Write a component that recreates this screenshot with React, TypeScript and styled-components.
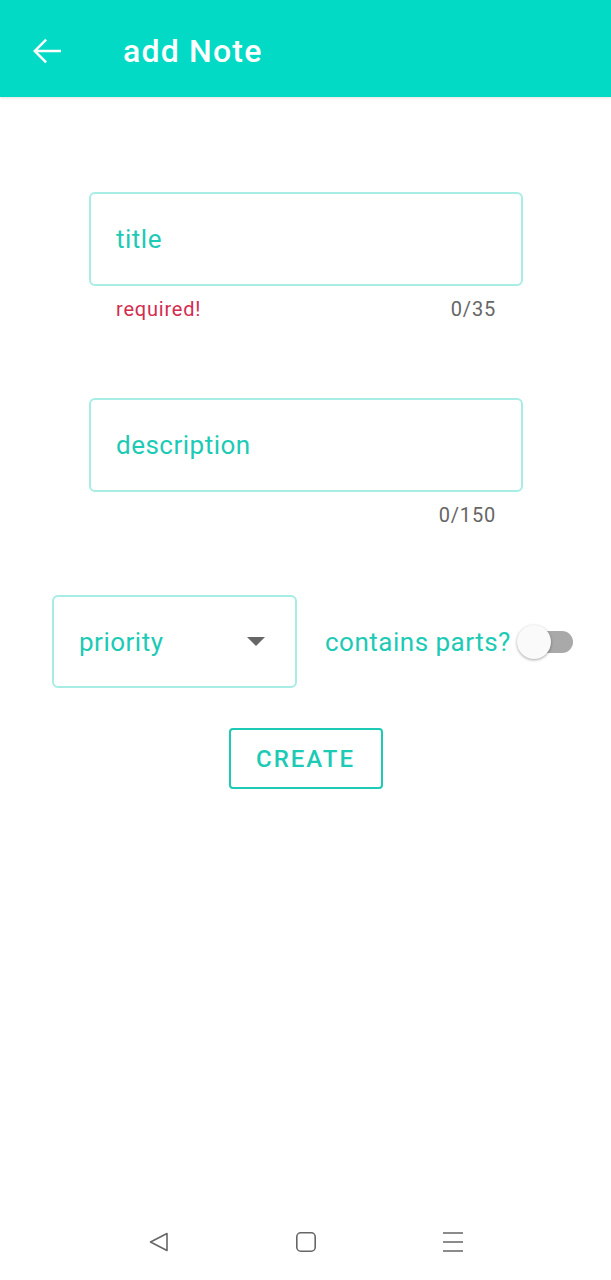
import React from "react";
import styled, { createGlobalStyle } from "styled-components";

const teal = "#03dac5";
const tealText = "#1ccab5";
const tealBorder = "#a7ece5";

const GlobalStyle = createGlobalStyle`
  body {
    margin: 0;
    background: #ffffff;
    font-family: Roboto, "Noto Sans", sans-serif;
  }
`;

type FieldProps = {
  label: string;
  error?: string;
  counter: string;
};

const TextField = ({ label, error, counter }: FieldProps) => (
  <FieldWrap>
    <FieldBox>
      <FieldLabel>{label}</FieldLabel>
    </FieldBox>
    <HelperRow>
      <ErrorText>{error}</ErrorText>
      <Counter>{counter}</Counter>
    </HelperRow>
  </FieldWrap>
);

const App = () => {
  return (
    <Page>
      <GlobalStyle />
      <AppBar>
        <BackButton>
          <svg width="42" height="42" viewBox="0 0 24 24" fill="#ffffff">
            <path d="M20 11.3H6.7l5.3-5.3-1-1L4 12l7 7 1-1-5.3-5.3H20z" />
          </svg>
        </BackButton>
        <Title>add Note</Title>
      </AppBar>

      <Content>
        <Fields>
          <TextField label="title" error="required!" counter="0/35" />
          <TextField label="description" counter="0/150" />
        </Fields>

        <OptionsRow>
          <SelectBox>
            <FieldLabel>priority</FieldLabel>
            <Caret />
          </SelectBox>
          <SwitchLabel>contains parts?</SwitchLabel>
          <SwitchTrack>
            <SwitchThumb />
          </SwitchTrack>
        </OptionsRow>

        <CreateButton>CREATE</CreateButton>
      </Content>

      <NavBar>
        <svg width="24" height="24" viewBox="0 0 24 24" fill="none" stroke="#666" strokeWidth="1.6" strokeLinejoin="round">
          <path d="M20 3.5v17L3.5 12z" />
        </svg>
        <svg width="24" height="24" viewBox="0 0 24 24" fill="none" stroke="#666" strokeWidth="1.6">
          <rect x="2.8" y="2.8" width="18.4" height="18.4" rx="4" />
        </svg>
        <svg width="24" height="24" viewBox="0 0 24 24" fill="none" stroke="#666" strokeWidth="1.6">
          <path d="M2 3h20M2 12h20M2 21h20" />
        </svg>
      </NavBar>
    </Page>
  );
};

export default App;

const Page = styled.div`
  min-height: 1280px;
  display: flex;
  flex-direction: column;
`;

const AppBar = styled.header`
  height: 97px;
  background: ${teal};
  display: flex;
  align-items: center;
  box-shadow: 0 1px 3px rgba(0, 0, 0, 0.12);
  box-sizing: border-box;
`;

const BackButton = styled.div`
  width: 42px;
  height: 42px;
  margin-left: 26px;
  margin-top: 4px;
  display: flex;
`;

const Title = styled.h1`
  margin: 4px 0 0 55px;
  color: #ffffff;
  font-size: 32px;
  font-weight: 500;
  letter-spacing: 1.2px;
`;

const Content = styled.main`
  flex: 1;
  display: flex;
  flex-direction: column;
  padding-top: 95px;
`;

const Fields = styled.div`
  margin-left: 89px;
  width: 434px;
  display: flex;
  flex-direction: column;
  gap: 78px;
`;

const FieldWrap = styled.div`
  display: flex;
  flex-direction: column;
`;

const FieldBox = styled.div`
  height: 94px;
  box-sizing: border-box;
  border: 2px solid ${tealBorder};
  border-radius: 6px;
  display: flex;
  align-items: center;
  padding-left: 25px;
`;

const FieldLabel = styled.span`
  color: ${tealText};
  font-size: 26px;
  line-height: 30px;
  letter-spacing: 0.5px;
`;

const HelperRow = styled.div`
  display: flex;
  justify-content: space-between;
  padding: 0 27px;
  margin-top: 12px;
  font-size: 20px;
  line-height: 22px;
  letter-spacing: 0.8px;
  height: 22px;
`;

const ErrorText = styled.span`
  color: #d22c50;
`;

const Counter = styled.span`
  color: #666666;
`;

const OptionsRow = styled.div`
  display: flex;
  align-items: center;
  margin: 69px 0 0 52px;
`;

const SelectBox = styled.div`
  width: 245px;
  height: 93px;
  box-sizing: border-box;
  border: 2px solid ${tealBorder};
  border-radius: 6px;
  display: flex;
  align-items: center;
  justify-content: space-between;
  padding: 0 30px 0 25px;
`;

const Caret = styled.div`
  width: 0;
  height: 0;
  border-left: 9px solid transparent;
  border-right: 9px solid transparent;
  border-top: 9px solid #666666;
`;

const SwitchLabel = styled.span`
  margin-left: 28px;
  color: ${tealText};
  font-size: 26px;
  line-height: 30px;
  letter-spacing: 0.5px;
`;

const SwitchTrack = styled.div`
  position: relative;
  width: 48px;
  height: 22px;
  margin-left: 14px;
  border-radius: 11px;
  background: #a9a9a9;
`;

const SwitchThumb = styled.div`
  position: absolute;
  left: -8px;
  top: -6px;
  width: 34px;
  height: 34px;
  border-radius: 50%;
  background: #fafafa;
  box-shadow: 0 1px 3px rgba(0, 0, 0, 0.35);
`;

const CreateButton = styled.button`
  align-self: center;
  margin-top: 40px;
  width: 154px;
  height: 61px;
  background: #ffffff;
  border: 2px solid ${tealText};
  border-radius: 4px;
  color: ${tealText};
  font-family: Roboto, sans-serif;
  font-size: 24px;
  font-weight: 500;
  letter-spacing: 2px;
  padding: 0;
`;

const NavBar = styled.nav`
  height: 76px;
  display: flex;
  align-items: center;
  justify-content: center;
  gap: 123px;
`;
